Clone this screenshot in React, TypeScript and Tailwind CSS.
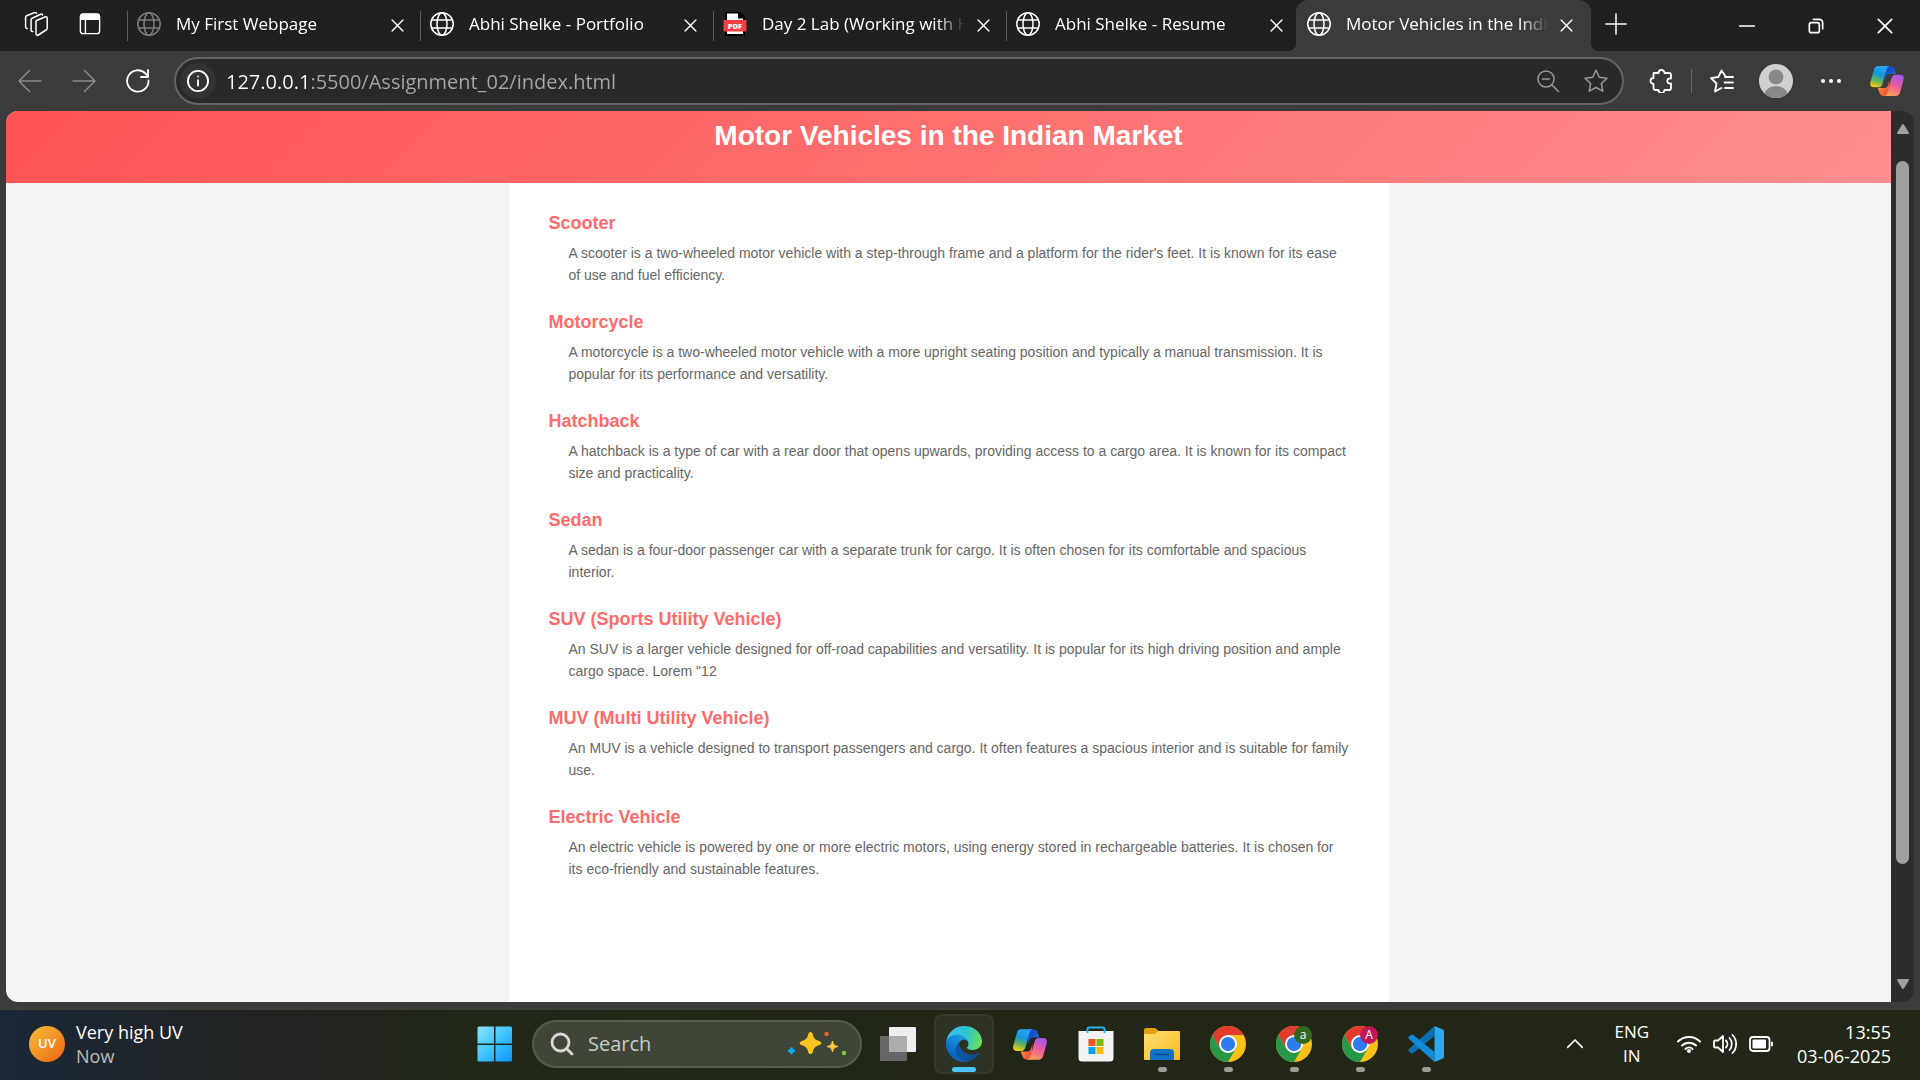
import type { ReactNode } from "react";

type IconProps = { className?: string };

const vehicles = [
  {
    name: "Scooter",
    text: "A scooter is a two-wheeled motor vehicle with a step-through frame and a platform for the rider's feet. It is known for its ease of use and fuel efficiency.",
  },
  {
    name: "Motorcycle",
    text: "A motorcycle is a two-wheeled motor vehicle with a more upright seating position and typically a manual transmission. It is popular for its performance and versatility.",
  },
  {
    name: "Hatchback",
    text: "A hatchback is a type of car with a rear door that opens upwards, providing access to a cargo area. It is known for its compact size and practicality.",
  },
  {
    name: "Sedan",
    text: "A sedan is a four-door passenger car with a separate trunk for cargo. It is often chosen for its comfortable and spacious interior.",
  },
  {
    name: "SUV (Sports Utility Vehicle)",
    text: 'An SUV is a larger vehicle designed for off-road capabilities and versatility. It is popular for its high driving position and ample cargo space. Lorem "12',
  },
  {
    name: "MUV (Multi Utility Vehicle)",
    text: "An MUV is a vehicle designed to transport passengers and cargo. It often features a spacious interior and is suitable for family use.",
  },
  {
    name: "Electric Vehicle",
    text: "An electric vehicle is powered by one or more electric motors, using energy stored in rechargeable batteries. It is chosen for its eco-friendly and sustainable features.",
  },
];

/* ---------- browser icons ---------- */

function Line({ className = "size-6", children, width = 1.5 }: IconProps & { children: ReactNode; width?: number }) {
  return (
    <svg viewBox="0 0 24 24" fill="none" stroke="currentColor" strokeWidth={width} strokeLinecap="round" strokeLinejoin="round" className={className} aria-hidden="true">
      {children}
    </svg>
  );
}

const Globe = ({ className }: IconProps) => (
  <Line className={className}>
    <circle cx="12" cy="12" r="11.2" />
    <ellipse cx="12" cy="12" rx="5" ry="11.2" />
    <path d="M1.6 8h20.8M1.6 16h20.8" />
  </Line>
);

const Close = ({ className }: IconProps) => (
  <Line className={className} width={2.6}>
    <path d="M2 2l20 20M22 2L2 22" />
  </Line>
);

const Workspaces = () => (
  <Line className="size-6">
    <path d="M12.5 8.5 21.5 4.8a1.2 1.2 0 0 1 1.7 1.1v10.3a2 2 0 0 1-1.2 1.8l-7.6 5a1.6 1.6 0 0 1-2.4-1.4V9.6a1.5 1.5 0 0 1 .5-1.1z" />
    <path d="M8.7 19.6a1.4 1.4 0 0 1-1.6-1.4V7.7c0-.6.4-1.2 1-1.5l8.600-4c.9-.4 1.700 0 1.900.8" />
    <path d="M3.200 16.400A1.500 1.500 0 0 1 1.600 15V5.200c0-.6.4-1.200 1-1.500L10.600.6c.9-.3 1.600 0 1.900.7" />
  </Line>
);

const VerticalTabs = () => (
  <Line className="size-[22px]">
    <rect x="1.500" y="1.500" width="21" height="21" rx="3" />
    <path d="M2 3a2 2 0 0 1 2-2h16a2 2 0 0 1 2 2v4H2z" fill="currentColor" />
    <path d="M7 7v15" />
  </Line>
);

const PdfFile = () => (
  <svg viewBox="0 0 24 24" className="size-6" aria-hidden="true">
    <path d="M2 0h15l5 5v19H2z" fill="#000" />
    <path d="M4 1.500h11v5h5V22H4z" fill="#fff" />
    <rect x="0.500" y="8" width="23" height="11.500" rx="1" fill="#f43f3f" />
    <text x="12" y="16.500" textAnchor="middle" fontSize="7.500" fontWeight="800" fill="#fff" fontFamily="Open Sans, sans-serif">
      PDF
    </text>
  </svg>
);

const CopilotMark = ({ className, id }: IconProps & { id: string }) => (
  <svg viewBox="0 0 101 90" className={className} aria-hidden="true">
    <defs>
      <linearGradient id={`${id}-a`} x1="0.600" y1="0" x2="0.300" y2="1">
        <stop offset="0" stopColor="#25a7f5" />
        <stop offset="0.400" stopColor="#1595dc" />
        <stop offset="0.700" stopColor="#63b45c" />
        <stop offset="1" stopColor="#f8cd10" />
      </linearGradient>
      <linearGradient id={`${id}-b`} x1="0.700" y1="0" x2="0.300" y2="1">
        <stop offset="0" stopColor="#a355f0" />
        <stop offset="0.500" stopColor="#ee5c9c" />
        <stop offset="1" stopColor="#fba052" />
      </linearGradient>
      <linearGradient id={`${id}-c`} x1="0" y1="0" x2="1" y2="1">
        <stop offset="0" stopColor="#0d3fb4" />
        <stop offset="1" stopColor="#2a74ea" />
      </linearGradient>
      <linearGradient id={`${id}-d`} x1="0" y1="0" x2="1" y2="1">
        <stop offset="0" stopColor="#ffa43c" />
        <stop offset="1" stopColor="#e8413c" />
      </linearGradient>
    </defs>
    <path d="M46 0h14q10 0 14 12l4 12H60q-10 0-13 10l-4 14z" fill={`url(#${id}-c)`} />
    <path d="M55 90H41q-10 0-14-12l-4-12h18q10 0 13-10l4-14z" fill={`url(#${id}-d)`} />
    <path d="M24 0h34q-7 3-10 13L37 53q-3 11-12 11H12q-15 0-11-16L11 12q3-12 13-12z" fill={`url(#${id}-a)`} />
    <path d="M77 90H43q7-3 10-13l11-40q3-11 12-11h13q15 0 11 16L90 78q-3 12-13 12z" fill={`url(#${id}-b)`} />
  </svg>
);

/* ---------- taskbar icons ---------- */

const WindowsLogo = () => (
  <svg viewBox="0 0 36 36" className="size-9" aria-hidden="true">
    <defs>
      <linearGradient id="win" x1="0" y1="0" x2="1" y2="1" gradientUnits="objectBoundingBox">
        <stop offset="0" stopColor="#8be2ff" />
        <stop offset="0.500" stopColor="#3fc4ff" />
        <stop offset="1" stopColor="#0a93fb" />
      </linearGradient>
    </defs>
    <path fill="url(#win)" d="M2 .5h15v17H.5V2A1.500 1.500 0 0 1 2 .5zM18.500.5h15A1.500 1.500 0 0 1 35 2v15.500H18.500zM.5 19H17v16.500H2A1.500 1.500 0 0 1 .5 34zM18.500 19H35v15a1.500 1.500 0 0 1-1.500 1.500h-15z" />
  </svg>
);

const TaskView = () => (
  <svg viewBox="0 0 36 36" className="size-9" aria-hidden="true">
    <rect x="9" y="1" width="27" height="25" rx="1" fill="#eeeeee" />
    <rect x="0" y="10" width="27" height="25" rx="1" fill="#666666" />
    <path d="M9 10h18v16H9z" fill="#adadad" />
  </svg>
);

const EdgeLogo = () => (
  <svg viewBox="0 0 256 256" className="size-9" aria-hidden="true">
    <defs>
      <linearGradient id="edge-a" x1="60" y1="177" x2="241" y2="177" gradientUnits="userSpaceOnUse">
        <stop offset="0" stopColor="#0c59a4" />
        <stop offset="1" stopColor="#114a8b" />
      </linearGradient>
      <linearGradient id="edge-b" x1="155" y1="100" x2="46" y2="220" gradientUnits="userSpaceOnUse">
        <stop offset="0" stopColor="#1b9de2" />
        <stop offset="0.500" stopColor="#1383d8" />
        <stop offset="1" stopColor="#0a5fc0" />
      </linearGradient>
      <linearGradient id="edge-c" x1="10" y1="60" x2="250" y2="130" gradientUnits="userSpaceOnUse">
        <stop offset="0" stopColor="#35c1f1" />
        <stop offset="0.500" stopColor="#2ec3d0" />
        <stop offset="1" stopColor="#6be34f" />
      </linearGradient>
    </defs>
    <path fill="url(#edge-a)" d="M231 190.500c-3.400 1.800-6.900 3.400-10.500 4.700a101.500 101.500 0 0 1-35.900 6.400c-47.300 0-88.500-32.500-88.500-74.300 0-11.400 6.400-21.900 16.400-27.300-42.800 1.800-53.800 46.400-53.800 72.500 0 74 68.100 81.400 82.800 81.400 7.900 0 19.800-2.300 27-4.600l1.300-.4a128 128 0 0 0 66.600-52.800 4 4 0 0 0-5.400-5.600z" />
    <path fill="url(#edge-b)" d="M105.700 241.400a79.200 79.200 0 0 1-22.700-21.300 80.700 80.700 0 0 1 29.500-120c3.200-1.500 8.500-4.100 15.600-4a32.400 32.400 0 0 1 25.700 13 31.900 31.900 0 0 1 6.300 18.700c0-.2 24.500-79.600-80-79.600-43.900 0-80 41.600-80 78.200 0 19.200 4 38 12.500 55.200a128 128 0 0 0 156.700 67.100 75.500 75.500 0 0 1-63.600-7.300z" />
    <path fill="url(#edge-c)" d="M152.300 148.900c-.9 1-3.400 2.500-3.400 5.600 0 2.600 1.700 5.200 4.800 7.300 14.300 10 41.400 8.600 41.500 8.600 10.700 0 21.100-2.900 30.300-8.300A61.400 61.400 0 0 0 256 109.100c.3-22.400-8-37.300-11.300-43.900C223.500 23.900 177.700 0 128 0A128 128 0 0 0 0 126.200c.5-36.500 36.800-66 80-66 3.500 0 23.500.3 42 10.100 16.300 8.500 24.900 18.900 30.800 29.200 6.200 10.700 7.300 24.100 7.300 29.500s-2.700 13.300-7.800 19.900z" />
  </svg>
);

const StoreLogo = () => (
  <svg viewBox="0 0 36 36" className="size-9" aria-hidden="true">
    <path d="M.5 5h35v27a3.500 3.500 0 0 1-3.500 3.500H4A3.500 3.500 0 0 1 .5 32z" fill="#f2f2f2" />
    <path d="M9.500 7V3a1.500 1.500 0 0 1 1.500-1.500h14A1.500 1.500 0 0 1 26.500 3v4" fill="none" stroke="#2bb3e8" strokeWidth="2" />
    <path d="M10.500 13h7v7h-7z" fill="#f25022" />
    <path d="M18.500 13h7v7h-7z" fill="#7fba00" />
    <path d="M10.500 21h7v7h-7z" fill="#00a4ef" />
    <path d="M18.500 21h7v7h-7z" fill="#ffb900" />
  </svg>
);

const ExplorerLogo = () => (
  <svg viewBox="0 0 36 36" className="size-9" aria-hidden="true">
    <defs>
      <linearGradient id="folder" x1="0" y1="0" x2="1" y2="1">
        <stop offset="0" stopColor="#ffdf75" />
        <stop offset="1" stopColor="#fdbb1c" />
      </linearGradient>
    </defs>
    <path d="M0 4a2 2 0 0 1 2-2h9l4 3v4H0z" fill="#e0a010" />
    <path d="M0 8h10.500l4-3H35a1 1 0 0 1 1 1v27a1 1 0 0 1-1 1H1a1 1 0 0 1-1-1z" fill="url(#folder)" />
    <path d="M6 34V27a4 4 0 0 1 4-4h16a4 4 0 0 1 4 4v7z" fill="#0f74c8" />
    <path d="M11 28.500h14" stroke="#0a4b8c" strokeWidth="1.500" strokeLinecap="round" />
  </svg>
);

const ChromeLogo = () => (
  <svg viewBox="0 0 48 48" className="size-9" aria-hidden="true">
    <circle cx="24" cy="24" r="24" fill="#fbc116" />
    <path d="M24 12h20.800A24 24 0 0 0 3.200 12l10.400 18z" fill="#e33b2e" />
    <path d="M3.200 12A24 24 0 0 0 24 48l10.400-18L24 36l-10.400-6z" fill="#279847" />
    <circle cx="24" cy="24" r="12" fill="#fff" />
    <circle cx="24" cy="24" r="9.500" fill="#2f7bf0" />
  </svg>
);

const VsCodeLogo = () => (
  <svg viewBox="0 0 36 36" className="size-9" aria-hidden="true">
    <path d="M1 23 26.500 0v10L5 27.200a1.600 1.600 0 0 1-2 0L.8 25.200a1.500 1.500 0 0 1 .2-2.200z" fill="#0a6fb5" />
    <path d="M1 13 26.500 36V26L5 8.800a1.600 1.600 0 0 0-2 0L.8 10.800A1.500 1.500 0 0 0 1 13z" fill="#0f8bd8" />
    <path d="M26.500 0 35 3.500a2 2 0 0 1 1 1.700v25.600a2 2 0 0 1-1 1.700L26.500 36z" fill="#28a9f2" />
  </svg>
);

const Sparkles = () => (
  <svg viewBox="0 0 60 26" className="h-[26px] w-[60px]" aria-hidden="true">
    <path d="M23.500 1c1.200 0 2 1 2.300 2.200 1 4.300 2.500 5.500 6.300 6.700 3 1 3 3.300 0 4.300-3.800 1.200-5.300 2.400-6.300 6.700-.7 2.700-3.900 2.700-4.600 0-1-4.300-2.500-5.500-6.300-6.700-3-1-3-3.300 0-4.300 3.800-1.200 5.300-2.400 6.300-6.700C21.500 2 22.300 1 23.500 1z" fill="#fcc521" />
    <path d="M45.500 10c.8 3.800 1.700 4.700 5.500 5.500-3.800.8-4.700 1.700-5.500 5.500-.8-3.800-1.700-4.700-5.500-5.500 3.800-.8 4.700-1.700 5.500-5.500z" fill="#fcc941" stroke="#fcc941" />
    <path d="M4.500 16.500c.5 2.300 1 2.800 3.300 3.300-2.300.5-2.800 1-3.300 3.300-.5-2.300-1-2.800-3.300-3.300 2.300-.5 2.800-1 3.300-3.300z" fill="#18a8f0" stroke="#18a8f0" strokeWidth="1.500" />
    <circle cx="39.500" cy="3" r="2.200" fill="#f0602a" />
    <circle cx="57" cy="22" r="2.200" fill="#86c440" />
  </svg>
);

/* ---------- window ---------- */

const tabs = [
  { title: "My First Webpage", icon: <Globe className="size-6 text-[#7d7d7d]" /> },
  { title: "Abhi Shelke - Portfolio", icon: <Globe className="size-6" /> },
  { title: "Day 2 Lab (Working with HTML)", icon: <PdfFile /> },
  { title: "Abhi Shelke - Resume", icon: <Globe className="size-6" /> },
];

function TabBody({ icon, title }: { icon: ReactNode; title: string }) {
  return (
    <>
      <button className="flex min-w-0 flex-1 items-center gap-[15px] text-left">
        <span className="shrink-0">{icon}</span>
        <span className="min-w-0 flex-1 overflow-hidden whitespace-nowrap text-[17px] leading-6 [mask-image:linear-gradient(to_right,black_calc(100%-28px),transparent)]">{title}</span>
      </button>
      <button aria-label={`Close ${title}`} className="ml-3 shrink-0 pt-[3px]">
        <Close className="size-[13px]" />
      </button>
    </>
  );
}

function TabStrip() {
  return (
    <div className="flex h-[51px] shrink-0 bg-[#202020]">
      <div className="flex w-[127px] shrink-0 items-center gap-[31px] pb-[3px] pl-6">
        <button aria-label="Workspaces"><Workspaces /></button>
        <button aria-label="Tab actions"><VerticalTabs /></button>
      </div>
      {tabs.map((tab) => (
        <div key={tab.title} className="flex h-12 w-[293px] min-w-0 shrink items-center">
          <span className="mt-1 h-[30px] w-px shrink-0 bg-[#5f5f5f]" />
          <div className="flex min-w-0 flex-1 items-center pr-4 pl-[9px]">
            <TabBody icon={tab.icon} title={tab.title} />
          </div>
        </div>
      ))}
      <div className="relative -ml-[3px] flex w-[295px] min-w-0 shrink rounded-t-xl bg-[#3b3b3b] pr-[18px] pb-[3px] pl-[11px]">
        <span className="absolute bottom-0 -left-2 size-2 bg-[radial-gradient(circle_at_0_0,transparent_8px,#3b3b3b_8px)]" />
        <span className="absolute -right-2 bottom-0 size-2 bg-[radial-gradient(circle_at_100%_0,transparent_8px,#3b3b3b_8px)]" />
        <TabBody icon={<Globe className="size-6" />} title="Motor Vehicles in the Indian Market" />
      </div>
      <button aria-label="New tab" className="ml-[13px] pb-1">
        <Line className="size-6"><path d="M12 2v20M2 12h20" /></Line>
      </button>
      <div className="ml-auto flex shrink-0 items-center gap-[53px] pr-[27px]">
        <button aria-label="Minimize"><Line className="size-4" width={2.5}><path d="M1 12h22" /></Line></button>
        <button aria-label="Restore">
          <Line className="size-4" width={2.5}>
            <rect x="2" y="7" width="15" height="15" rx="3" />
            <path d="M8 2h9a5 5 0 0 1 5 5v9" />
          </Line>
        </button>
        <button aria-label="Close window"><Close className="size-4" /></button>
      </div>
    </div>
  );
}

function Toolbar() {
  return (
    <div className="flex h-[60px] shrink-0 items-center pr-4 pl-[18px]">
      <div className="flex shrink-0 items-center gap-[30px] text-[#8a8a8a]">
        <button aria-label="Back"><Line className="size-6"><path d="M23 12H1M11.500 1.500 1 12l10.500 10.500" /></Line></button>
        <button aria-label="Forward"><Line className="size-6"><path d="M1 12h22M12.500 1.500 23 12 12.500 22.500" /></Line></button>
        <button aria-label="Refresh" className="text-white">
          <Line className="size-6" width={1.8}>
            <path d="M22.500 11.500A10.700 10.700 0 1 1 19.500 4.500L22 7.500" />
            <path d="M22 1v7h-7" />
          </Line>
        </button>
      </div>
      <div className="ml-6 flex h-12 min-w-0 flex-1 items-center rounded-full border-2 border-[#646464] bg-[#292929] pr-[14px] pl-1">
        <button aria-label="View site information" className="flex size-9 shrink-0 items-center justify-center rounded-full bg-[#333333]">
          <Line className="size-[22px]" width={2}>
            <circle cx="12" cy="12" r="11" />
            <path d="M12 11v6M12 7v.2" />
          </Line>
        </button>
        <input
          aria-label="Address"
          defaultValue="127.0.0.1:5500/Assignment_02/index.html"
          className="ml-[10px] min-w-0 flex-1 bg-linear-to-r from-white from-[84px] to-[#a8a8a8] to-[84px] bg-clip-text pt-px text-[20px] text-transparent outline-none"
        />
        <div className="flex shrink-0 items-center gap-6 text-[#999999]">
          <button aria-label="Zoom">
            <Line className="size-6">
              <circle cx="10" cy="10" r="8" />
              <path d="M6.500 10h7M16 16l6.500 6.500" />
            </Line>
          </button>
          <button aria-label="Add to favorites">
            <Line className="size-6"><path d="M12 1.200l3.300 7 7.700 1-5.600 5.300 1.400 7.700L12 18.500l-6.800 3.700 1.400-7.700L1 9.200l7.700-1z" /></Line>
          </button>
        </div>
      </div>
      <div className="ml-[25px] flex shrink-0 items-center">
        <button aria-label="Extensions">
          <Line className="size-6" width={1.8}>
            <path d="M4.500 4h5a3 3 0 0 1 6 0h4.500a2 2 0 0 1 2 2v3.500c-5-1-5 6 0 5V19a2 2 0 0 1-2 2h-4.500a3 3 0 0 1-6 0h-3a2 2 0 0 1-2-2v-4a3 3 0 0 1 0-6z" />
          </Line>
        </button>
        <span className="ml-[18px] h-6 w-px bg-[#666666]" />
        <button aria-label="Favorites" className="ml-[18px]">
          <Line className="size-6" width={1.8}>
            <path d="M22 8h-6l-4.500-6.500L8.300 8 1 9.200l5.500 5.300L5 22.500l6.500-3.500" />
            <path d="M15 8h8M14.500 13.500H23M15 19h8" />
          </Line>
        </button>
        <button aria-label="Profile" className="ml-[25px]">
          <svg viewBox="0 0 34 34" className="size-[34px]" aria-hidden="true">
            <clipPath id="avatar"><circle cx="17" cy="17" r="17" /></clipPath>
            <g clipPath="url(#avatar)">
              <path d="M0 0h34v34H0z" fill="#d2d0ce" />
              <circle cx="17" cy="13" r="7.500" fill="#8a8886" />
              <ellipse cx="17" cy="32" rx="12" ry="10" fill="#8a8886" />
            </g>
          </svg>
        </button>
        <button aria-label="Settings and more" className="ml-[26px]">
          <svg viewBox="0 0 24 24" className="size-6" fill="currentColor" aria-hidden="true">
            <circle cx="4" cy="12" r="2" /><circle cx="12" cy="12" r="2" /><circle cx="20" cy="12" r="2" />
          </svg>
        </button>
        <button aria-label="Copilot" className="ml-[27px]"><CopilotMark id="bar" className="h-[30px] w-[34px]" /></button>
      </div>
    </div>
  );
}

function Page() {
  return (
    <div className="flex min-w-0 flex-1 flex-col overflow-hidden bg-[#f4f4f4] font-['Liberation_Sans',Arial,sans-serif]">
      <header className="h-[72px] shrink-0 bg-[linear-gradient(135deg,#ff5252,#ff8e8e)] pt-[7px] text-center">
        <h1 className="text-[28px] leading-9 font-bold">Motor Vehicles in the Indian Market</h1>
      </header>
      <main className="mx-auto w-full max-w-[880px] flex-1 bg-white px-10 pt-[27px]">
        <dl>
          {vehicles.map((v) => (
            <div key={v.name} className="mb-[23px]">
              <dt className="mb-[6px] text-[18px] leading-[26px] font-bold text-[#ff6b6b]">{v.name}</dt>
              <dd className="ml-5 text-[14px] leading-[22px] text-[#666666]">{v.text}</dd>
            </div>
          ))}
        </dl>
      </main>
    </div>
  );
}

function Scrollbar() {
  return (
    <div className="flex w-[23px] shrink-0 flex-col items-center bg-[#2c2c2c] py-3 text-[#a0a0a0]" aria-hidden="true">
      <svg viewBox="0 0 14 12" className="h-3 w-[14px]" fill="currentColor" stroke="currentColor" strokeWidth="2" strokeLinejoin="round"><path d="M7 2l5 8H2z" /></svg>
      <div className="mt-[26px] flex w-full flex-1 flex-col items-center">
        <span className="h-[86%] w-[13px] rounded-full bg-[#a0a0a0]" />
      </div>
      <svg viewBox="0 0 14 12" className="h-3 w-[14px]" fill="currentColor" stroke="currentColor" strokeWidth="2" strokeLinejoin="round"><path d="M7 10l5-8H2z" /></svg>
    </div>
  );
}

const apps: { name: string; icon: ReactNode; running?: boolean; active?: boolean; badge?: ReactNode }[] = [
  { name: "Task View", icon: <TaskView /> },
  { name: "Microsoft Edge", icon: <EdgeLogo />, active: true },
  { name: "Copilot", icon: <CopilotMark id="task" className="h-[31px] w-[34px]" /> },
  { name: "Microsoft Store", icon: <StoreLogo /> },
  { name: "File Explorer", icon: <ExplorerLogo />, running: true },
  { name: "Google Chrome", icon: <ChromeLogo />, running: true },
  {
    name: "Google Chrome, profile a",
    icon: <ChromeLogo />,
    running: true,
    badge: <span className="absolute top-0 right-0 flex size-[18px] items-center justify-center rounded-full bg-[#33691e] text-[12px] leading-none">a</span>,
  },
  {
    name: "Google Chrome, profile A",
    icon: <ChromeLogo />,
    running: true,
    badge: <span className="absolute top-0 right-0 flex size-[18px] items-center justify-center rounded-full bg-[#c2185b] text-[12px] leading-none">A</span>,
  },
  { name: "Visual Studio Code", icon: <VsCodeLogo />, running: true },
];

function Taskbar() {
  return (
    <footer className="grid h-[72px] shrink-0 grid-cols-[1fr_auto_1fr] items-center border-t-2 border-[#3d4038] bg-[linear-gradient(90deg,#1b2838_0%,#202426_10%,#22231e_18%,#1f2819_24%,#202818_34%,#212617_50%,#222717_100%)] pb-[2px]">
      <button className="flex items-center gap-[11px] justify-self-start pl-[29px] text-left">
        <span className="flex size-9 items-center justify-center rounded-full bg-linear-to-br from-[#eec03a] to-[#f0600c] text-[13px] font-semibold">UV</span>
        <span className="text-[18px] leading-6">
          <span className="block">Very high UV</span>
          <span className="block text-[#bdbdbd]">Now</span>
        </span>
      </button>

      <div className="flex items-center pl-[13px]">
        <button aria-label="Start"><WindowsLogo /></button>
        <label className="ml-[19px] flex h-12 w-[330px] items-center rounded-full border-2 border-[#565b50] bg-[#3f4637] pr-[13px] pl-4">
          <Line className="size-6 text-[#d6d9d4]" width={2.8}>
            <circle cx="10.500" cy="10.500" r="8.500" />
            <path d="M17 17l5 5" />
          </Line>
          <span className="sr-only">Search</span>
          <input type="text" placeholder="Search" className="ml-[14px] min-w-0 flex-1 bg-transparent text-[20px] outline-none placeholder:text-[#c8cbc5]" />
          <Sparkles />
        </label>
        <div className="ml-[6px] flex gap-[6px]">
          {apps.map((app) => (
            <button
              key={app.name}
              aria-label={app.name}
              className={
                app.active
                  ? "flex h-[60px] w-[60px] flex-col items-center rounded-lg border-2 border-[#353a2c] bg-[#2d3225] pt-[10px]"
                  : "flex h-[60px] w-[60px] flex-col items-center border-2 border-transparent pt-[10px]"
              }
            >
              <span className="relative flex size-9 items-center justify-center">
                {app.icon}
                {app.badge}
              </span>
              {app.active && <span className="mt-[5px] h-[5px] w-6 shrink-0 rounded-full bg-[#4cc2ff]" />}
              {app.running && <span className="mt-[5px] h-[5px] w-[9px] shrink-0 rounded-full bg-[#9a9d94]" />}
            </button>
          ))}
        </div>
      </div>

      <div className="flex items-center justify-self-end pr-[29px] text-[18px] leading-6">
        <button aria-label="Show hidden icons">
          <Line className="size-4" width={2.5}><path d="M1 17 12 6l11 11" /></Line>
        </button>
        <button className="ml-[31px] text-center text-[17px]">
          <span className="block">ENG</span>
          <span className="block">IN</span>
        </button>
        <button aria-label="Network, volume and battery" className="ml-7 flex gap-3">
          <Line className="size-6" width={2}>
            <path d="M1 9.500a15.500 15.500 0 0 1 22 0M5 13.500a10 10 0 0 1 14 0M8.500 17a5 5 0 0 1 7 0" />
            <circle cx="12" cy="19" r="1" fill="currentColor" />
          </Line>
          <Line className="size-6" width={1.8}>
            <path d="M1 9.500a1 1 0 0 1 1-1h3L10 4v16l-5-4.500H2a1 1 0 0 1-1-1z" />
            <path d="M13 8.500a5 5 0 0 1 0 7M16.500 6a9 9 0 0 1 0 12M19.500 3a13 13 0 0 1 0 18" />
          </Line>
          <Line className="size-6" width={1.8}>
            <rect x="1" y="5" width="19.500" height="14" rx="3" />
            <rect x="3.500" y="7.500" width="13.500" height="9" rx="1" fill="currentColor" stroke="none" />
            <path d="M23 10.500v3" />
          </Line>
        </button>
        <button className="ml-6 text-right">
          <span className="block">13:55</span>
          <span className="block">03-06-2025</span>
        </button>
      </div>
    </footer>
  );
}

export default function App() {
  return (
    <div className="flex h-screen w-full flex-col overflow-hidden bg-[#3b3b3b] font-['Open_Sans','Noto_Sans',sans-serif] text-white">
      <TabStrip />
      <Toolbar />
      <div className="mx-[6px] mb-[6px] flex min-h-0 flex-1 overflow-hidden rounded-xl">
        <Page />
        <Scrollbar />
      </div>
      <Taskbar />
    </div>
  );
}
